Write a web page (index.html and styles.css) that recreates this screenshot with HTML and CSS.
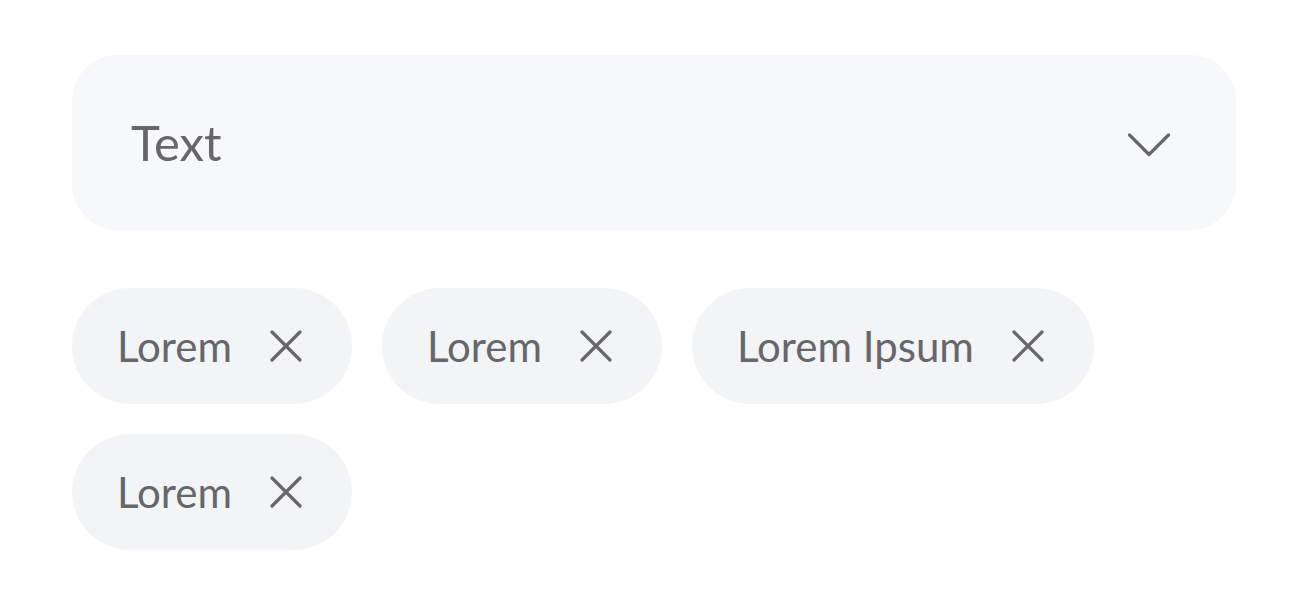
FILE: index.html
```html
<!DOCTYPE html>
<html lang="en">
<head>
  <meta charset="UTF-8">
  <title>Select with chips</title>
  <link rel="stylesheet" href="styles.css">
</head>
<body>
  <div class="wrap">
    <div class="select">
      <span class="select-text">Text</span>
      <svg class="chevron" width="44" height="27" viewBox="0 0 44 27">
        <path d="M2.5 3 L22 22.5 L41.5 3" fill="none" stroke="#67676b" stroke-width="3.2" stroke-linecap="round" stroke-linejoin="round"/>
      </svg>
    </div>

    <div class="chips">
      <div class="chip"><span>Lorem</span><svg class="x" width="32" height="32" viewBox="0 0 32 32"><path d="M2 2 L30 30 M30 2 L2 30" stroke="#67676b" stroke-width="3.2" stroke-linecap="round"/></svg></div>
      <div class="chip"><span>Lorem</span><svg class="x" width="32" height="32" viewBox="0 0 32 32"><path d="M2 2 L30 30 M30 2 L2 30" stroke="#67676b" stroke-width="3.2" stroke-linecap="round"/></svg></div>
      <div class="chip"><span>Lorem Ipsum</span><svg class="x" width="32" height="32" viewBox="0 0 32 32"><path d="M2 2 L30 30 M30 2 L2 30" stroke="#67676b" stroke-width="3.2" stroke-linecap="round"/></svg></div>
      <div class="chip"><span>Lorem</span><svg class="x" width="32" height="32" viewBox="0 0 32 32"><path d="M2 2 L30 30 M30 2 L2 30" stroke="#67676b" stroke-width="3.2" stroke-linecap="round"/></svg></div>
    </div>
  </div>
</body>
</html>
```

FILE: styles.css
```css
body { margin: 0; background: #fff; font-family: Lato, "Liberation Sans", sans-serif; color: #67676b; }
.wrap { padding: 55px 68px 0 72px; }
.select { height: 175px; background: #f7f8fa; border-radius: 46px; display: flex; align-items: center; justify-content: space-between; padding: 0 65px 0 59px; box-sizing: border-box; }
.select-text { font-size: 49px; line-height: 1; }
.chevron { display: block; margin-top: 6px; }
.chips { display: flex; flex-wrap: wrap; gap: 30px; margin-top: 58px; width: 1100px; }
.chip { height: 116px; border-radius: 58px; background: #f3f4f6; display: flex; align-items: center; gap: 38px; padding: 0 50px 0 45px; box-sizing: border-box; font-size: 42px; }
.x { display: block; }
```
